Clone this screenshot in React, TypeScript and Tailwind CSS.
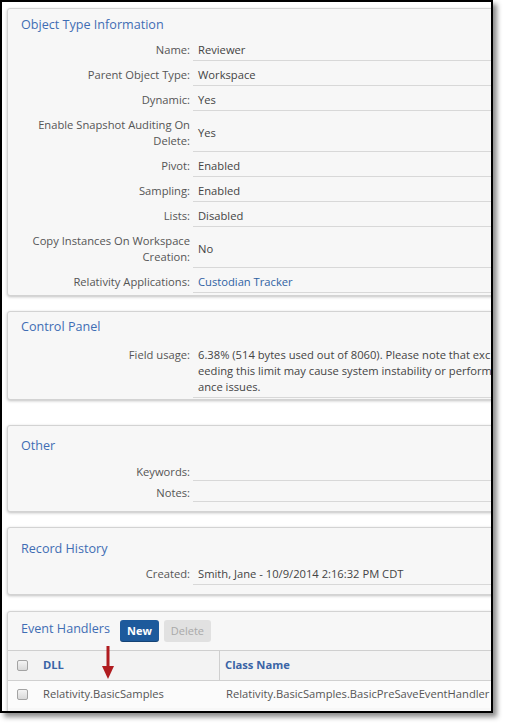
import type { ReactNode } from 'react';

const font = "font-['Open_Sans',Roboto,sans-serif]";

function Panel({ className, children }: { className?: string; children: ReactNode }) {
    return (
        <section className={`w-[530px] border border-[#d3d3d3] rounded-[3px] bg-[#f7f7f7] shadow-[0_1px_3px_rgba(0,0,0,0.25)] ${className ?? ''}`}>
            {children}
        </section>
    );
}

function Title({ children }: { children: ReactNode }) {
    return <h2 className="pl-[13px] text-[12.6px] leading-[18px] text-[#3f6db4]">{children}</h2>;
}

function Row({ label, children, top }: { label: string; children?: ReactNode; top?: boolean }) {
    return (
        <div className="flex">
            <div className={`w-[185px] shrink-0 flex justify-end text-right pr-[3px] pt-[6px] pb-[3px] leading-4 text-[#555] ${top ? 'items-start' : 'items-center'}`}>
                {label}
            </div>
            <div className="flex-1 flex items-center border-b border-[#d8d8d8] pl-[5px] pt-[6px] pb-[2px] leading-4 text-[#444]">
                {children}
            </div>
        </div>
    );
}

function EmptyRow({ label }: { label: string }) {
    return (
        <div className="flex h-[21px]">
            <div className="w-[185px] shrink-0 text-right pr-[3px] pt-[4px] leading-4 text-[#555]">{label}</div>
            <div className="flex-1 border-b border-[#d8d8d8]" />
        </div>
    );
}

function Checkbox() {
    return <span className="block w-[11px] h-[11px] rounded-[2px] border border-[#a3a3a3] bg-gradient-to-b from-[#f4f4f4] to-[#d9d9d9]" />;
}

export default function App() {
    return (
        <div className={`w-[508px] h-[728px] bg-white ${font} text-[11.2px]`}>
            <div className="w-[493px] h-[713px] border-2 border-black bg-white overflow-hidden shadow-[4px_4px_5px_rgba(0,0,0,0.45)] pl-[5px] pt-[6px] relative">
                {/* Object Type Information */}
                <Panel className="pt-[7px] pb-[2px]">
                    <Title>Object Type Information</Title>
                    <div className="mt-[2px]">
                        <Row label="Name:">Reviewer</Row>
                        <Row label="Parent Object Type:">Workspace</Row>
                        <Row label="Dynamic:">Yes</Row>
                        <Row label="Enable Snapshot Auditing On Delete:">Yes</Row>
                        <Row label="Pivot:">Enabled</Row>
                        <Row label="Sampling:">Enabled</Row>
                        <Row label="Lists:">Disabled</Row>
                        <Row label="Copy Instances On Workspace Creation:">No</Row>
                        <Row label="Relativity Applications:">
                            <span className="text-[#2f62a3]">Custodian Tracker</span>
                        </Row>
                    </div>
                </Panel>

                {/* Control Panel */}
                <Panel className="mt-[15px] pt-[6px] pb-[1px]">
                    <Title>Control Panel</Title>
                    <div className="mt-[5px]">
                        <Row label="Field usage:" top>
                            <span className="block w-[296px] break-all">
                                6.38% (514 bytes used out of 8060). Please note that exceeding this limit may cause system instability or performance issues.
                            </span>
                        </Row>
                    </div>
                </Panel>

                {/* Other */}
                <Panel className="mt-[25px] pt-[11px] pb-[9px]">
                    <Title>Other</Title>
                    <div className="mt-[5px]">
                        <EmptyRow label="Keywords:" />
                        <EmptyRow label="Notes:" />
                    </div>
                </Panel>

                {/* Record History */}
                <Panel className="mt-[15px] pt-[12px] pb-[9px]">
                    <Title>Record History</Title>
                    <div className="mt-[2px]">
                        <Row label="Created:">Smith, Jane - 10/9/2014 2:16:32 PM CDT</Row>
                    </div>
                </Panel>

                {/* Event Handlers */}
                <Panel className="mt-[16px] pt-[8px] h-[120px]">
                    <div className="flex items-start h-[22px]">
                        <Title>Event Handlers</Title>
                        <button className="ml-[10px] h-[22px] px-[7px] rounded-[3px] bg-[#1d5a9c] text-white font-bold text-[11px] leading-[22px] shadow-[inset_0_-1px_0_rgba(0,0,0,0.25)]">
                            New
                        </button>
                        <button className="ml-[5px] h-[22px] px-[7px] rounded-[3px] bg-[#e1e1e1] text-[#a9a9a9] text-[11px] leading-[22px]">
                            Delete
                        </button>
                    </div>
                    <div className="mt-[8px] border-t border-[#cfcfcf]">
                        <div className="flex h-[30px] bg-[#f3f3f3] border-b border-[#d0d0d0]">
                            <div className="w-[212px] shrink-0 flex items-center pl-[9px] border-r border-[#cfcfcf]">
                                <Checkbox />
                                <span className="ml-[15px] font-bold text-[#3a64a6]">DLL</span>
                            </div>
                            <div className="flex items-center pl-[5px] font-bold text-[#3a64a6]">Class Name</div>
                        </div>
                        <div className="flex h-[27px] bg-[#fbfbfb] text-[#555]">
                            <div className="w-[213px] shrink-0 flex items-center pl-[9px]">
                                <Checkbox />
                                <span className="ml-[15px]">Relativity.BasicSamples</span>
                            </div>
                            <div className="flex items-center pl-[5px]">Relativity.BasicSamples.BasicPreSaveEventHandler</div>
                        </div>
                    </div>
                </Panel>

                {/* red annotation arrow */}
                <svg className="absolute left-[99px] top-[644px]" width="14" height="34" viewBox="0 0 14 34">
                    <rect x="5.5" y="0" width="3" height="22" fill="#b01c20" />
                    <polygon points="1,20 13,20 7,33" fill="#b01c20" />
                </svg>
            </div>
        </div>
    );
}
